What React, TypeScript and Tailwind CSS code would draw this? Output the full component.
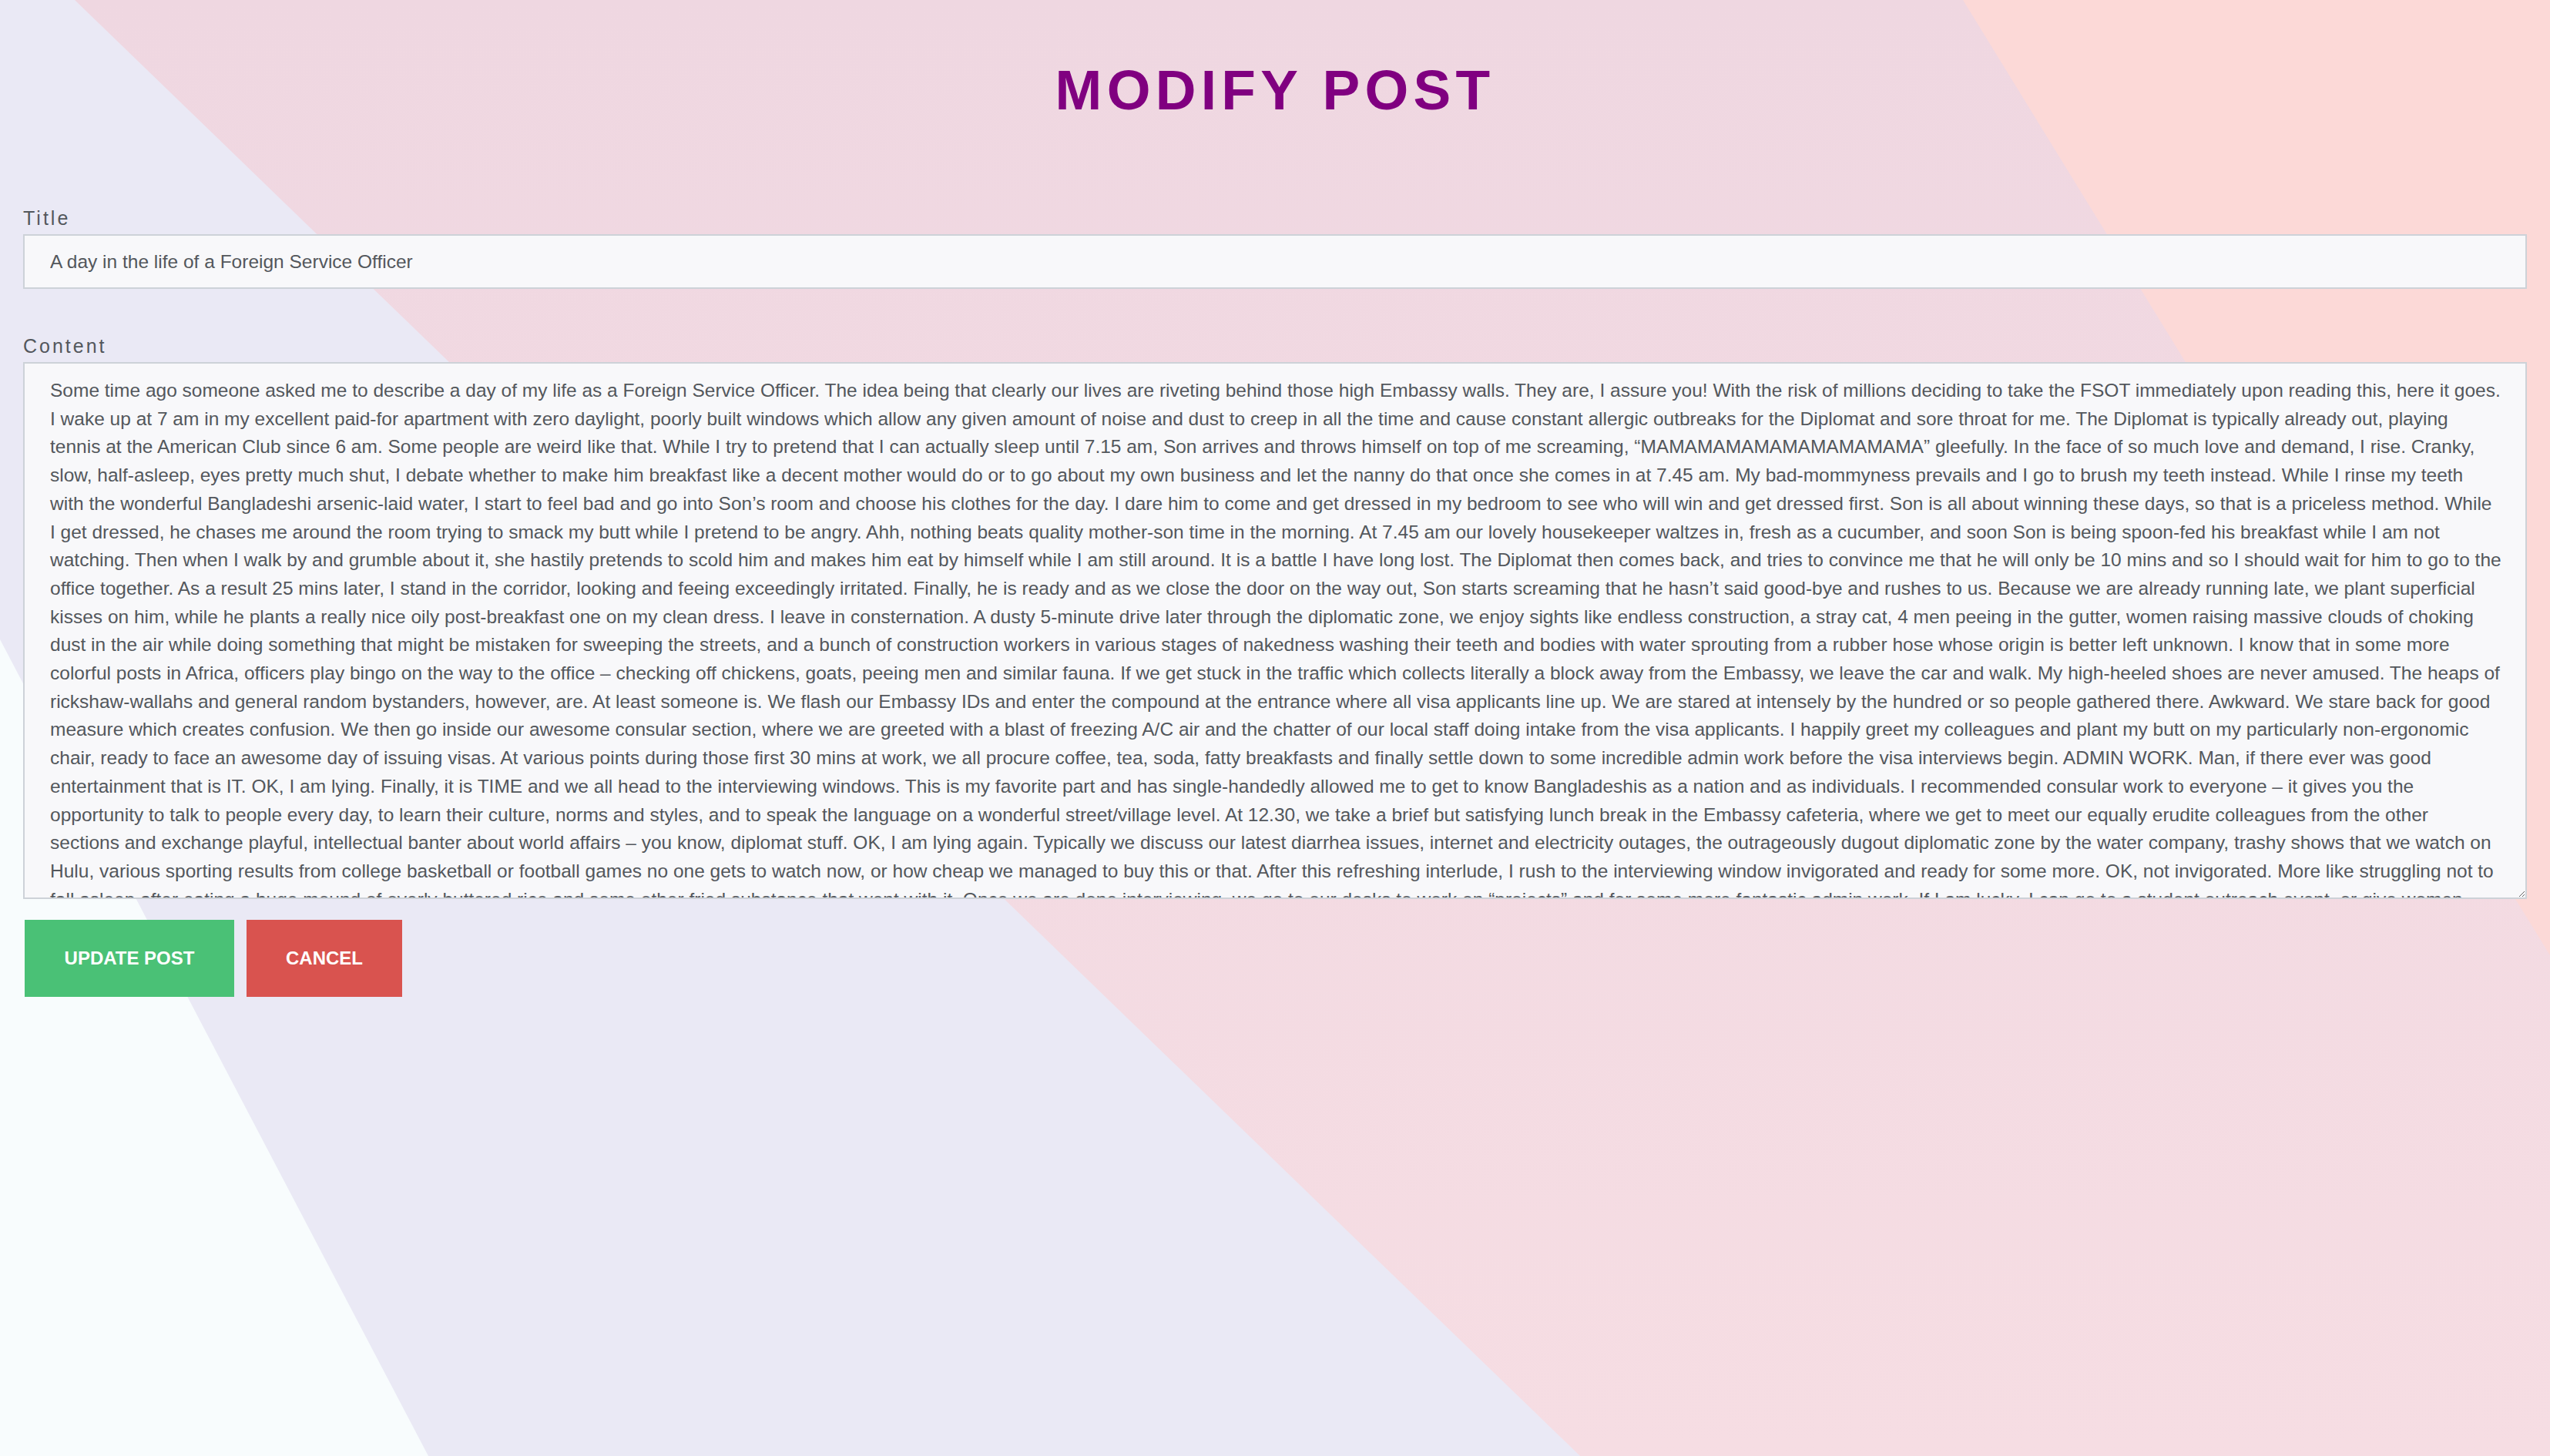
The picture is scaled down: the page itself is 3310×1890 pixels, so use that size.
import React, { useState } from 'react';

// Paragraph split at the same points where the original textarea wraps
const contentLines = [
  'Some time ago someone asked me to describe a day of my life as a Foreign Service Officer. The idea being that clearly our lives are riveting behind those high Embassy walls. They are, I assure you! With the risk of millions deciding to take the FSOT immediately upon reading this, here it goes.',
  'I wake up at 7 am in my excellent paid-for apartment with zero daylight, poorly built windows which allow any given amount of noise and dust to creep in all the time and cause constant allergic outbreaks for the Diplomat and sore throat for me. The Diplomat is typically already out, playing',
  'tennis at the American Club since 6 am. Some people are weird like that. While I try to pretend that I can actually sleep until 7.15 am, Son arrives and throws himself on top of me screaming, “MAMAMAMAMAMAMAMAMAMA” gleefully. In the face of so much love and demand, I rise. Cranky,',
  'slow, half-asleep, eyes pretty much shut, I debate whether to make him breakfast like a decent mother would do or to go about my own business and let the nanny do that once she comes in at 7.45 am. My bad-mommyness prevails and I go to brush my teeth instead. While I rinse my teeth',
  'with the wonderful Bangladeshi arsenic-laid water, I start to feel bad and go into Son’s room and choose his clothes for the day. I dare him to come and get dressed in my bedroom to see who will win and get dressed first. Son is all about winning these days, so that is a priceless method. While',
  'I get dressed, he chases me around the room trying to smack my butt while I pretend to be angry. Ahh, nothing beats quality mother-son time in the morning. At 7.45 am our lovely housekeeper waltzes in, fresh as a cucumber, and soon Son is being spoon-fed his breakfast while I am not',
  'watching. Then when I walk by and grumble about it, she hastily pretends to scold him and makes him eat by himself while I am still around. It is a battle I have long lost. The Diplomat then comes back, and tries to convince me that he will only be 10 mins and so I should wait for him to go to the',
  'office together. As a result 25 mins later, I stand in the corridor, looking and feeing exceedingly irritated. Finally, he is ready and as we close the door on the way out, Son starts screaming that he hasn’t said good-bye and rushes to us. Because we are already running late, we plant superficial',
  'kisses on him, while he plants a really nice oily post-breakfast one on my clean dress. I leave in consternation. A dusty 5-minute drive later through the diplomatic zone, we enjoy sights like endless construction, a stray cat, 4 men peeing in the gutter, women raising massive clouds of choking',
  'dust in the air while doing something that might be mistaken for sweeping the streets, and a bunch of construction workers in various stages of nakedness washing their teeth and bodies with water sprouting from a rubber hose whose origin is better left unknown. I know that in some more',
  'colorful posts in Africa, officers play bingo on the way to the office – checking off chickens, goats, peeing men and similar fauna. If we get stuck in the traffic which collects literally a block away from the Embassy, we leave the car and walk. My high-heeled shoes are never amused. The heaps of',
  'rickshaw-wallahs and general random bystanders, however, are. At least someone is. We flash our Embassy IDs and enter the compound at the entrance where all visa applicants line up. We are stared at intensely by the hundred or so people gathered there. Awkward. We stare back for good',
  'measure which creates confusion. We then go inside our awesome consular section, where we are greeted with a blast of freezing A/C air and the chatter of our local staff doing intake from the visa applicants. I happily greet my colleagues and plant my butt on my particularly non-ergonomic',
  'chair, ready to face an awesome day of issuing visas. At various points during those first 30 mins at work, we all procure coffee, tea, soda, fatty breakfasts and finally settle down to some incredible admin work before the visa interviews begin. ADMIN WORK. Man, if there ever was good',
  'entertainment that is IT. OK, I am lying. Finally, it is TIME and we all head to the interviewing windows. This is my favorite part and has single-handedly allowed me to get to know Bangladeshis as a nation and as individuals. I recommended consular work to everyone – it gives you the',
  'opportunity to talk to people every day, to learn their culture, norms and styles, and to speak the language on a wonderful street/village level. At 12.30, we take a brief but satisfying lunch break in the Embassy cafeteria, where we get to meet our equally erudite colleagues from the other',
  'sections and exchange playful, intellectual banter about world affairs – you know, diplomat stuff. OK, I am lying again. Typically we discuss our latest diarrhea issues, internet and electricity outages, the outrageously dugout diplomatic zone by the water company, trashy shows that we watch on',
  'Hulu, various sporting results from college basketball or football games no one gets to watch now, or how cheap we managed to buy this or that. After this refreshing interlude, I rush to the interviewing window invigorated and ready for some more. OK, not invigorated. More like struggling not to',
  'fall asleep after eating a huge mound of overly buttered rice and some other fried substance that went with it. Once we are done interviewing, we go to our desks to work on “projects” and for some more fantastic admin work. If I am lucky, I can go to a student outreach event, or give women',
];

// Diagonal pastel planes behind the form
const Backdrop = () => (
  <svg
    className="absolute inset-0 w-full h-full pointer-events-none"
    viewBox="0 0 3310 1890"
    preserveAspectRatio="none"
  >
    <defs>
      <linearGradient id="pinkFade" x1="0" y1="0" x2="0" y2="1">
        <stop offset="0" stopColor="#efd7e1" />
        <stop offset="1" stopColor="#f6dde3" />
      </linearGradient>
    </defs>
    <rect x="0" y="0" width="3310" height="1890" fill="#eae9f5" />
    <polygon points="97,0 3310,0 3310,1890 2051,1890" fill="url(#pinkFade)" />
    <polygon points="2548,0 3310,0 3310,1240" fill="#fcd9d7" />
    <polygon points="0,830 556,1890 0,1890" fill="#f8fcfd" />
  </svg>
);

export default function App() {
  const [title, setTitle] = useState('A day in the life of a Foreign Service Officer');
  const [content, setContent] = useState(contentLines.join('\n'));

  return (
    <div className="relative min-h-screen w-full overflow-hidden font-['Liberation_Sans',Arial,sans-serif]">
      <Backdrop />

      <div className="relative px-[30px] pt-[80px]">
        <h1 className="text-center text-[73px] leading-[73px] font-bold tracking-[6.3px] text-[#800080]">
          MODIFY POST
        </h1>

        <form className="mt-[115px] flex flex-col" onSubmit={(e) => e.preventDefault()}>
          <label className="mb-[6px] text-[25px] leading-[30px] tracking-[3px] text-[#53575c]">Title</label>
          <input
            value={title}
            onChange={(e) => setTitle(e.target.value)}
            className="h-[71px] w-full border-2 border-[#cdd2d8] bg-[#f8f8fa] px-[33px] text-[24.5px] text-[#53575c] outline-none"
          />

          <label className="mt-[59px] mb-[6px] text-[25px] leading-[30px] tracking-[3px] text-[#53575c]">Content</label>
          <textarea
            value={content}
            onChange={(e) => setContent(e.target.value)}
            className="h-[697px] w-full border-2 border-[#cdd2d8] bg-[#f8f8fa] pl-[33px] pr-[14px] pt-[17px] text-[24.5px] leading-[36.7px] text-[#53575c] outline-none"
          />

          <div className="mt-[27px] ml-[2px] flex gap-[16px]">
            <button
              type="submit"
              className="h-[100px] w-[272px] bg-[#4ac176] text-[24px] font-bold uppercase text-white"
            >
              Update Post
            </button>
            <button
              type="button"
              className="h-[100px] w-[202px] bg-[#d9534f] text-[24px] font-bold uppercase text-white"
            >
              Cancel
            </button>
          </div>
        </form>
      </div>
    </div>
  );
}
